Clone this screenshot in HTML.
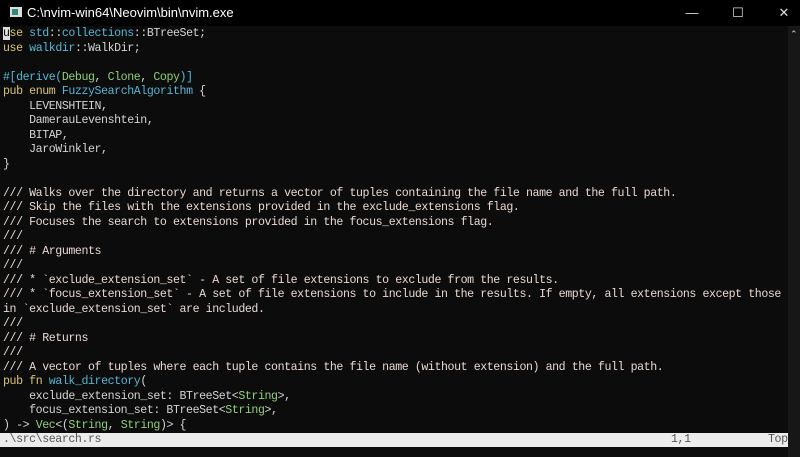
<!DOCTYPE html>
<html><head><meta charset="utf-8"><style>
html,body{margin:0;padding:0;width:800px;height:457px;overflow:hidden;background:#0c0c0c}
#title{position:absolute;left:0;top:0;width:800px;height:26px;background:#000;color:#fff;font:13px "Liberation Sans",sans-serif}
#title .t{position:absolute;left:27px;top:5px}
#title .ic{position:absolute;left:10px;top:7px;width:12px;height:10px;background:#ddd}
#title .ic:after{content:"";position:absolute;left:2px;top:2px;width:6px;height:6px;background:#2b8a7a}
.wb{position:absolute;top:0;height:26px;color:#ddd;font:13px "Liberation Sans",sans-serif;line-height:26px;text-align:center;width:40px}
#sb{position:absolute;left:788px;top:26px;width:12px;height:431px;background:#171717}
#sb .up{position:absolute;left:2px;top:3px;color:#ccc;font:9px sans-serif}
#code{position:absolute;left:3px;top:27px;font:11.6px/14.5px "Liberation Mono",monospace;letter-spacing:-0.42px;color:#d4d4d4;white-space:pre}
.k{color:#d8c477}.b{color:#56b6d6}.g{color:#8fd07a}.c{color:#ead8cf}
#status{position:absolute;left:0;top:433px;width:788px;height:14px;background:#ececec;color:#555;font:11.6px/14px "Liberation Mono",monospace;letter-spacing:-0.42px;white-space:pre}
#status span{position:absolute;top:0}
.cur{background:#ddd;color:#000}
</style></head><body>
<div id="title"><div class="ic"></div><div class="t">C:\nvim-win64\Neovim\bin\nvim.exe</div>
<div class="wb" style="left:672px">&#8212;</div><div class="wb" style="left:718px">&#9744;</div><div class="wb" style="left:764px">&#10005;</div></div>
<div id="sb"><div class="up">&#8963;</div></div>
<div id="code"><span class="k"><span class="cur">u</span>se</span> <span class="b">std</span>::<span class="b">collections</span>::BTreeSet;
<span class="k">use</span> <span class="b">walkdir</span>::WalkDir;

<span class="b">#[derive(</span><span class="g">Debug</span>, <span class="g">Clone</span>, <span class="g">Copy</span><span class="b">)]</span>
<span class="k">pub</span> <span class="k">enum</span> <span class="b">FuzzySearchAlgorithm</span> {
    LEVENSHTEIN,
    DamerauLevenshtein,
    BITAP,
    JaroWinkler,
}

<span class="c">/// Walks over the directory and returns a vector of tuples containing the file name and the full path.
/// Skip the files with the extensions provided in the exclude_extensions flag.
/// Focuses the search to extensions provided in the focus_extensions flag.
///
/// # Arguments
///
/// * `exclude_extension_set` - A set of file extensions to exclude from the results.
/// * `focus_extension_set` - A set of file extensions to include in the results. If empty, all extensions except those
in `exclude_extension_set` are included.
///
/// # Returns
///
/// A vector of tuples where each tuple contains the file name (without extension) and the full path.</span>
<span class="k">pub</span> <span class="k">fn</span> <span class="b">walk_directory</span>(
    exclude_extension_set: BTreeSet&lt;<span class="g">String</span>&gt;,
    focus_extension_set: BTreeSet&lt;<span class="g">String</span>&gt;,
) -&gt; <span class="g">Vec</span>&lt;(<span class="g">String</span>, <span class="g">String</span>)&gt; {</div>
<div id="status"><span style="left:3px">.\src\search.rs</span><span style="left:671px">1,1</span><span style="left:768px">Top</span></div>
</body></html>
